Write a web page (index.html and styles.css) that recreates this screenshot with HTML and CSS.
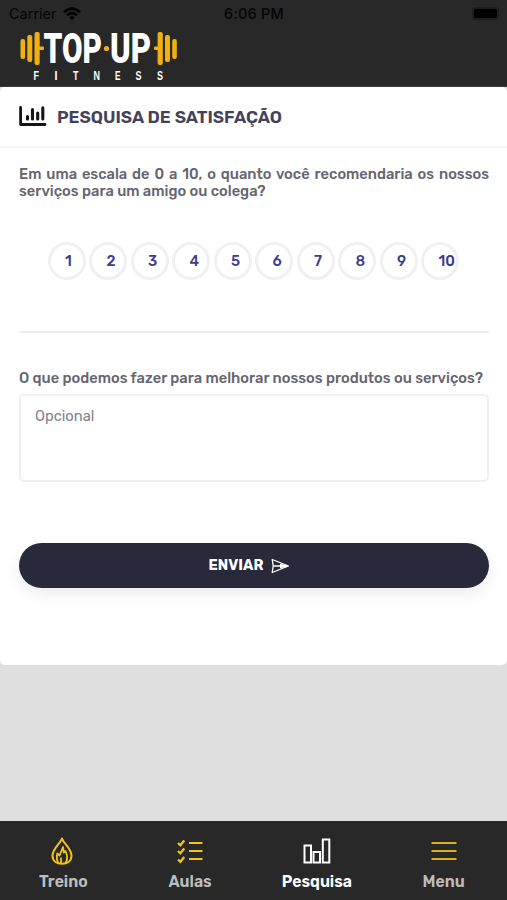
FILE: index.html
```html
<!DOCTYPE html>
<html lang="pt-BR">
<head>
  <meta charset="UTF-8" />
  <meta name="viewport" content="width=device-width, initial-scale=1.0" />
  <title>Top-Up Fitness</title>
  <link rel="stylesheet" href="styles.css">
</head>
<body>

  <header class="header">
    <div class="status">
      <div class="carrier">
        <span>Carrier</span>
        <svg width="18" height="14" viewBox="0 0 18 14" fill="none" stroke="#000" stroke-width="2.6">
          <path d="M1 5.2Q9-2 17 5.2M4 8.3q5-4.4 10 0" />
          <path d="M6.3 10.4q2.7-2.2 5.4 0L9 13.2z" fill="#000" stroke="none" />
        </svg>
      </div>
      <span class="time">6:06 PM</span>
      <span class="battery"></span>
    </div>
    <svg class="logo" width="160" height="54" viewBox="0 0 160 54">
      <g fill="#f0b012">
        <rect x="0.5" y="10" width="4.6" height="20" rx="2" />
        <rect x="7.3" y="6" width="5" height="27" rx="2" />
        <rect x="14.5" y="3" width="5.2" height="33" rx="2" />
        <rect x="18" y="17.5" width="6" height="3.5" rx="1" />
        <circle cx="86.5" cy="19.5" r="2.6" />
        <rect x="134" y="17.5" width="6" height="3.5" rx="1" />
        <rect x="137.6" y="3" width="5.2" height="33" rx="2" />
        <rect x="145" y="6" width="5" height="27" rx="2" />
        <rect x="152.2" y="10" width="4.6" height="20" rx="2" />
      </g>
      <g class="logo-name">
        <text transform="translate(23.5 34) scale(1 1.5)" textLength="58.5" lengthAdjust="spacingAndGlyphs">TOP</text>
        <text transform="translate(90 34) scale(1 1.5)" textLength="41" lengthAdjust="spacingAndGlyphs">UP</text>
      </g>
      <g class="logo-sub">
        <text x="13.5" y="50.5" textLength="5.5" lengthAdjust="spacingAndGlyphs">F</text>
        <text x="34.5" y="50.5" textLength="3" lengthAdjust="spacingAndGlyphs">I</text>
        <text x="53" y="50.5" textLength="5.5" lengthAdjust="spacingAndGlyphs">T</text>
        <text x="73.5" y="50.5" textLength="6.5" lengthAdjust="spacingAndGlyphs">N</text>
        <text x="95" y="50.5" textLength="5.5" lengthAdjust="spacingAndGlyphs">E</text>
        <text x="115.5" y="50.5" textLength="6" lengthAdjust="spacingAndGlyphs">S</text>
        <text x="137" y="50.5" textLength="6" lengthAdjust="spacingAndGlyphs">S</text>
      </g>
    </svg>
  </header>

  <main class="card">
    <div class="card-header">
      <svg width="28" height="21" viewBox="0 0 28 21" fill="none" stroke="#161616" stroke-linecap="round">
        <path d="M1.6 1.4V18.5H26" stroke-width="2.8" stroke-linejoin="round" />
        <path d="M8.5 10.5v2.5M13.5 3.5v9.5M18.7 7v6M23.8 1.8v11.2" stroke-width="3.1" />
      </svg>
      <h1>PESQUISA DE SATISFAÇÃO</h1>
    </div>

    <form class="survey">
      <p class="question">Em uma escala de 0 a 10, o quanto você recomendaria os nossos serviços para um amigo ou colega?</p>

      <div class="scores">
        <span>1</span>
        <span>2</span>
        <span>3</span>
        <span>4</span>
        <span>5</span>
        <span>6</span>
        <span>7</span>
        <span>8</span>
        <span>9</span>
        <span>10</span>
      </div>

      <hr>

      <label for="comment">O que podemos fazer para melhorar nossos produtos ou serviços?</label>
      <textarea id="comment" placeholder="Opcional"></textarea>

      <button type="button">
        <span>ENVIAR</span>
        <svg width="19" height="16" viewBox="0 0 19 16" fill="none" stroke="#fff" stroke-width="1.3" stroke-linejoin="round">
          <path d="M1.2 1.5L17.5 8L1.2 14.5L2.2 8z" />
          <path d="M2.2 8H16M9 6.500L16 8L9 9.500" />
        </svg>
      </button>
    </form>
  </main>

  <nav class="tabs">
    <a class="tab">
      <svg width="26" height="28" viewBox="0 0 26 28" fill="none" stroke="#f0c419" stroke-width="2" stroke-linejoin="round">
        <path d="M12 1.5C10 7 2.5 11.5 2.5 18.5C2.5 24 6.5 26.8 12 26.8S21.5 24 21.5 18.5C21.5 11.5 14 7 12 1.5z" />
        <path d="M8.5 26C6 22 6.500 19.5 7.3 16.5L9.5 18.5L13 10L13.8 15.5L15.5 14C17.5 18.5 18 22.5 15.5 26M11 26.5V20.5" stroke-width="1.8" />
      </svg>
      <span>Treino</span>
    </a>
    <a class="tab">
      <svg width="26" height="28" viewBox="0 0 26 28" fill="none" stroke="#f0c419" stroke-width="2">
        <path d="M12 6H25.5M12 14H25.5M12 22H25.5" />
        <path d="M1 6l2.3 2.3L7.3 3.5M1 14l2.3 2.3L7.3 11.5M1 22.5l2.3 2.3L7.3 20" stroke-width="2.3" />
      </svg>
      <span>Aulas</span>
    </a>
    <a class="tab active">
      <svg width="28" height="28" viewBox="0 0 28 28" fill="none" stroke="#fff" stroke-width="2">
        <rect x="1.5" y="8.5" width="6.5" height="17" />
        <rect x="10.5" y="15" width="6.5" height="10.5" />
        <rect x="19.8" y="2.5" width="6.5" height="23" />
      </svg>
      <span>Pesquisa</span>
    </a>
    <a class="tab">
      <svg width="26" height="28" viewBox="0 0 26 28" fill="none" stroke="#dcb01c" stroke-width="2.2">
        <path d="M0.5 6H25.5M0.5 14H25.5M0.5 22H25.5" />
      </svg>
      <span>Menu</span>
    </a>
  </nav>

</body>
</html>
```
FILE: styles.css
```css
* {
  box-sizing: border-box;
}
body {
  font-family: Rubik, Roboto, sans-serif;
  background: #dfdfdf;
  margin: 0;
  height: 900px;
  display: flex;
  flex-direction: column;
  overflow: hidden;
}
svg {
  display: block;
  flex: none;
}
.header {
  background: #282828;
  height: 87px;
  border-bottom: 1px solid #3b3839;
}
.status {
  display: grid;
  grid-template-columns: 1fr auto 1fr;
  align-items: center;
  height: 27px;
  padding: 0 8px 0 9px;
  font-family: Inter, sans-serif;
  font-size: 14.5px;
  color: #050505;
}
.carrier {
  display: flex;
  align-items: center;
  gap: 6px;
}
.time {
  font-weight: 500;
  letter-spacing: 0.2px;
}
.battery {
  justify-self: end;
  width: 27px;
  height: 13px;
  border: 2px solid #1e1e1e;
  border-radius: 4px;
  background: #000;
}
.logo {
  margin: 2px 0 0 20px;
  overflow: visible;
}
.logo-name {
  font: 900 28px Roboto, sans-serif;
  fill: #fff;
}
.logo-sub {
  font: bold 12px "Liberation Sans Narrow", "Liberation Sans", sans-serif;
  fill: #fff;
}
.card {
  background: #fff;
  height: 578px;
  border-radius: 5px;
}
.card-header {
  display: flex;
  align-items: center;
  gap: 10px;
  height: 61px;
  padding: 0 19px;
  border-bottom: 2px solid #f5f5f5;
}
h1 {
  margin: 0;
  font-size: 17.35px;
  font-weight: 600;
  color: #444259;
}
.survey {
  display: flex;
  flex-direction: column;
  padding: 18px 18px 0 19px;
}
.question, label {
  margin: 0;
  font-size: 14.7px;
  font-weight: 500;
  line-height: 17px;
  color: #65656f;
}
.question {
  text-align: justify;
}
.scores {
  display: flex;
  gap: 3.5px;
  margin: 26px -19px 0;
  padding: 15px 0 14px 47.5px;
  border-top: 1px solid #fcfcfc;
  border-bottom: 1px solid #fcfcfc;
}
.scores span {
  width: 38px;
  height: 38px;
  padding-left: 14.4px;
  border: 3px solid #f0f0f0;
  border-radius: 50%;
  font-size: 14.7px;
  font-weight: 500;
  line-height: 32px;
  color: #3d3d8c;
}
hr {
  width: 100%;
  height: 2px;
  margin: 36px 0 37px;
  border: none;
  background: #eee;
}
textarea {
  height: 88px;
  margin-top: 7px;
  padding: 11px 14px;
  border: 2px solid #f0f0f1;
  border-radius: 5px;
  font: 14.7px Rubik, Roboto, sans-serif;
  resize: none;
}
textarea::placeholder {
  color: #84828f;
}
button {
  display: flex;
  align-items: center;
  justify-content: center;
  gap: 8px;
  height: 45px;
  margin-top: 61px;
  padding: 0 9px 2px 0;
  border: none;
  border-radius: 23px;
  background: #282a3c;
  box-shadow: 0 6px 16px rgba(0,0,0,0.08);
  color: #fff;
  font: bold 14.5px Rubik, Roboto, sans-serif;
}
button svg {
  margin-top: 3px;
}
.tabs {
  display: flex;
  height: 79px;
  margin-top: auto;
  background: #282828;
}
.tab {
  flex: 1;
  display: flex;
  flex-direction: column;
  align-items: center;
  gap: 7px;
  padding-top: 16px;
  font-size: 15.8px;
  font-weight: 600;
  line-height: 20px;
  color: #bdbdbd;
}
.tab.active {
  color: #fff;
}
```
